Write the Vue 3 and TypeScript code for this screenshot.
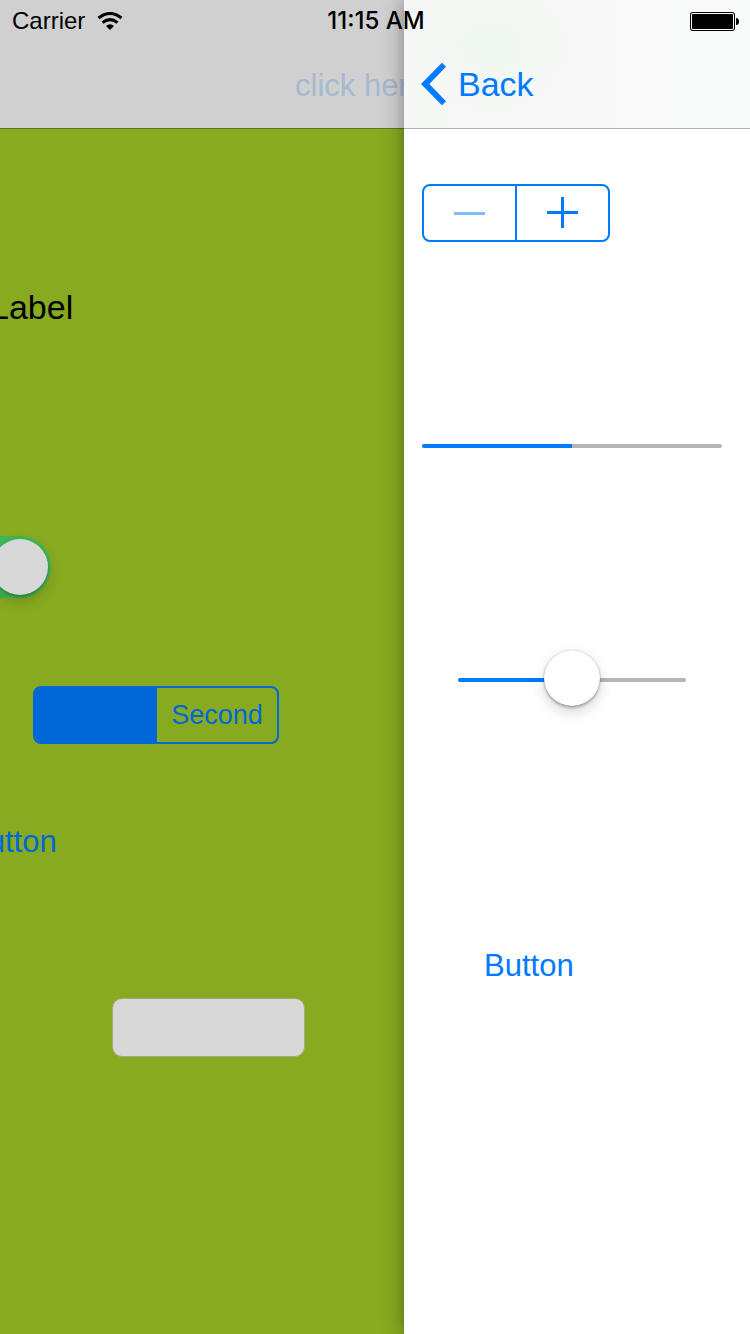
<script setup lang="ts">
import { ref } from 'vue'

const carrier = 'Carrier'
const time = '11:15 AM'
const switchOn = ref(true)
const segment = ref('first')
const fieldText = ref('')
const stepperValue = ref(0)
const progress = 50
const sliderValue = ref(50)
</script>

<template>
  <div class="screen">
    <section class="previous" aria-label="Previous screen">
      <div class="page">
        <header class="nav nav-previous">
          <a class="nav-title" href="#next">click here</a>
        </header>
        <p class="label">Label</p>
        <input v-model="switchOn" class="switch" type="checkbox" role="switch" aria-label="Switch" />
        <div class="segments" role="radiogroup" aria-label="Segments">
          <label class="segment" :class="{ active: segment === 'first' }">
            <input v-model="segment" type="radio" name="segment" value="first" aria-label="First segment" />
          </label>
          <label class="segment" :class="{ active: segment === 'second' }">
            <input v-model="segment" type="radio" name="segment" value="second" />
            <span>Second</span>
          </label>
        </div>
        <button class="text-button" type="button">Button</button>
        <input v-model="fieldText" class="field" type="text" aria-label="Text field" />
      </div>
    </section>

    <section class="current" aria-label="Current screen">
      <header class="nav nav-current">
        <a class="back" href="#back">
          <svg class="chevron" viewBox="0 0 26 44" aria-hidden="true">
            <path d="M21 .7 0 22l21 21.3 4-4L8.300 22 25 4.700z" fill="#007aff" />
          </svg>
          <span>Back</span>
        </a>
      </header>
      <div class="controls">
        <div class="stepper">
          <button type="button" aria-label="Decrement" :disabled="stepperValue === 0" @click="stepperValue--">
            <svg viewBox="0 0 31 31" aria-hidden="true"><path d="M0 14h31v3H0z" fill="currentColor" /></svg>
          </button>
          <button type="button" aria-label="Increment" @click="stepperValue++">
            <svg viewBox="0 0 31 31" aria-hidden="true"><path d="M0 13h14V-1h3v14h14v3H17v14h-3V16H0z" fill="currentColor" /></svg>
          </button>
        </div>
        <progress class="progress" :value="progress" max="100" aria-label="Progress"></progress>
        <input
          v-model.number="sliderValue"
          class="slider"
          type="range"
          min="0"
          max="100"
          aria-label="Slider"
          :style="{ '--fill': sliderValue + '%' }"
        />
        <button class="text-button" type="button">Button</button>
      </div>
    </section>

    <div class="status">
      <div class="status-left">
        <span>{{ carrier }}</span>
        <svg class="wifi" viewBox="0 0 26 18" aria-hidden="true">
          <path d="M1.500 6Q13-3.200 24.500 6" fill="none" stroke="#000" stroke-width="3" />
          <path d="M5.500 10.600Q13 4.600 20.500 10.600" fill="none" stroke="#000" stroke-width="3" />
          <path d="M9 14Q13 10.600 17 14L13 18z" />
        </svg>
      </div>
      <span class="time">{{ time }}</span>
      <svg class="battery" viewBox="0 0 50 20" aria-hidden="true">
        <rect x="0" y="1" width="45" height="19" rx="3" fill="#000" />
        <rect x="1" y="2" width="43" height="17" rx="2" fill="#fff" />
        <rect x="2" y="3" width="41" height="15" rx="1" fill="#000" />
        <path d="M46 7q3 0 3 3.500T46 14z" />
      </svg>
    </div>
  </div>
</template>

<style>
body {
  margin: 0;
}
</style>

<style scoped>
* {
  box-sizing: border-box;
}
.screen {
  position: relative;
  display: grid;
  grid-template-columns: 404fr 346fr;
  min-height: 100vh;
  overflow: hidden;
  font-family: "Liberation Sans", Arial, sans-serif;
  color: #000;
}
a {
  text-decoration: none;
}
button,
input {
  margin: 0;
  padding: 0;
  font: inherit;
}
.previous {
  min-width: 0;
  overflow: hidden;
  background: #88aa20;
}
.page {
  display: flex;
  flex-direction: column;
  align-items: flex-start;
  margin-left: -112px;
}
.nav {
  display: flex;
  align-items: center;
  align-self: stretch;
  height: 129px;
  padding-top: 40px;
  line-height: 40px;
}
.nav-previous {
  padding-top: 43px;
  background: #d0d0d0;
  border-bottom: 1px solid #5f7716;
}
.nav-title {
  margin-left: 407px;
  font-size: 31px;
  white-space: nowrap;
  color: #a5b9d0;
}
.label {
  margin: 158px 0 0 102px;
  font-size: 34px;
  line-height: 40px;
}
.switch {
  appearance: none;
  width: 102px;
  height: 62px;
  margin: 209px 0 0 61px;
  padding: 3px;
  border-radius: 31px;
  background: #a0a0a0;
}
.switch:checked {
  background: #40b755;
}
.switch::before {
  content: "";
  display: block;
  width: 56px;
  height: 56px;
  border-radius: 50%;
  background: #d8d8d8;
  box-shadow: 0 6px 14px rgba(0, 0, 0, 0.2), 0 2px 2px rgba(0, 0, 0, 0.15);
}
.switch:checked::before {
  margin-left: 40px;
}
.segments {
  display: grid;
  grid-template-columns: 122px 1fr;
  width: 246px;
  height: 58px;
  margin: 88px 0 0 145px;
  border: 2px solid #0067d8;
  border-radius: 8px;
  overflow: hidden;
  font-size: 27px;
  color: #0067d8;
}
.segment {
  display: flex;
  align-items: center;
  justify-content: center;
}
.segment.active {
  background: #0067d8;
  color: #88aa20;
}
.segment input {
  appearance: none;
  width: 0;
  height: 0;
}
.text-button {
  border: 0;
  background: none;
  font-size: 31px;
  line-height: 36px;
  color: #007aff;
}
.page .text-button {
  margin: 80px 0 0 79px;
  color: #0067d8;
}
.field {
  width: 193px;
  height: 59px;
  margin: 138px 0 0 224px;
  padding: 0 14px;
  border: 1px solid #a0ab80;
  border-radius: 10px;
  background: #d8d8d8;
  font-size: 28px;
}
.current {
  position: relative;
  min-width: 0;
  background: #fff;
  box-shadow: 0 0 20px rgba(0, 0, 0, 0.4);
}
.nav-current {
  padding-left: 17px;
  border-bottom: 1px solid #b2b2b2;
  background: radial-gradient(ellipse 90px 70px at 86px 46px, #eff7ef, #f5f8f5 70%, transparent), linear-gradient(90deg, #f6f8f6, #f8f8f8 50%, #f8faf9);
}
.back {
  display: flex;
  align-items: center;
  gap: 11px;
  font-size: 34px;
  color: #007aff;
}
.chevron {
  width: 26px;
  height: 44px;
}
.controls {
  display: flex;
  flex-direction: column;
  align-items: flex-start;
  padding: 55px 28px 0 18px;
}
.stepper {
  display: flex;
  width: 188px;
  height: 58px;
  border: 2px solid #007aff;
  border-radius: 8px;
}
.stepper button {
  display: flex;
  flex: 1;
  align-items: center;
  justify-content: center;
  border: 0;
  background: none;
  color: #007aff;
}
.stepper button + button {
  border-left: 2px solid #007aff;
}
.stepper button:disabled {
  color: #80bcff;
}
.stepper svg {
  width: 31px;
  height: 31px;
  overflow: visible;
}
.progress {
  appearance: none;
  display: block;
  width: 100%;
  height: 4px;
  margin-top: 202px;
  border: 0;
  border-radius: 2px;
  overflow: hidden;
}
.progress::-webkit-progress-bar {
  background: #b6b6b6;
}
.progress::-webkit-progress-value {
  background: #007aff;
}
.slider {
  appearance: none;
  align-self: stretch;
  height: 60px;
  margin: 202px 36px 0;
  background: none;
}
.slider::-webkit-slider-runnable-track {
  height: 4px;
  border-radius: 2px;
  background: linear-gradient(90deg, #007aff var(--fill), #b6b6b6 var(--fill));
}
.slider::-webkit-slider-thumb {
  appearance: none;
  width: 56px;
  height: 56px;
  margin-top: -28px;
  border-radius: 50%;
  background: #fff;
  box-shadow: 0 0 1px rgba(0, 0, 0, 0.4), 0 6px 14px rgba(0, 0, 0, 0.16), 0 2px 3px rgba(0, 0, 0, 0.25);
}
.controls .text-button {
  margin: 238px 0 0 62px;
}
.status {
  position: absolute;
  top: 0;
  left: 0;
  right: 0;
  display: grid;
  grid-template-columns: 1fr auto 1fr;
  align-items: center;
  height: 42px;
  padding: 0 10px 0 12px;
  font-size: 24px;
  line-height: 42px;
}
.status-left {
  display: flex;
  align-items: center;
  gap: 12px;
}
.wifi {
  width: 26px;
  height: 18px;
}
.time {
  font-family: Inter, "Liberation Sans", sans-serif;
  font-size: 24px;
  font-weight: 500;
}
.battery {
  justify-self: end;
  width: 50px;
  height: 20px;
}
</style>
